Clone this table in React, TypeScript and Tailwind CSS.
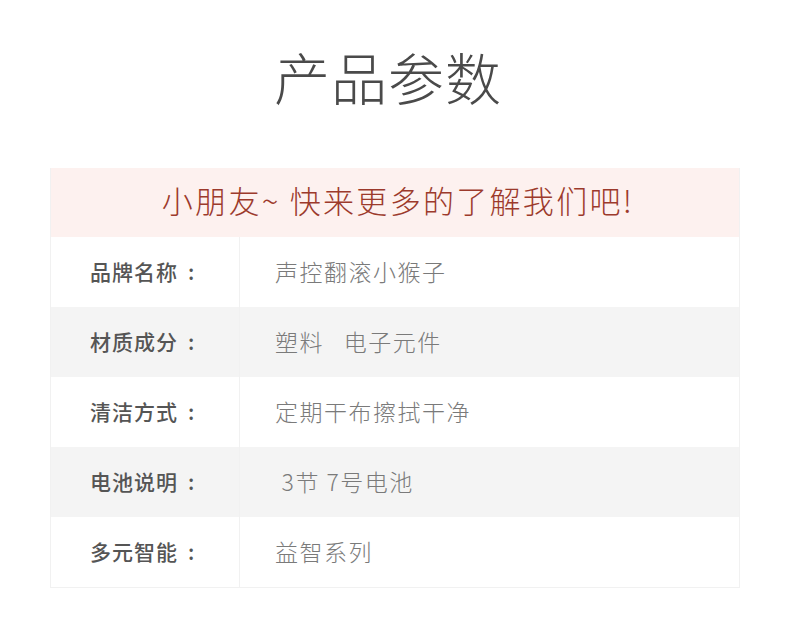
const rows = [
  { label: "品牌名称", value: "声控翻滚小猴子" },
  { label: "材质成分", value: "塑料\u00a0\u00a0 电子元件" },
  { label: "清洁方式", value: "定期干布擦拭干净" },
  { label: "电池说明", value: "\u00a03节 7号电池" },
  { label: "多元智能", value: "益智系列" },
]

export default function App() {
  return (
    <div
      className="w-[790px] h-[632px] bg-white overflow-hidden"
      style={{ fontFamily: '"Noto Sans CJK SC", "Noto Sans", sans-serif' }}
    >
      <h1 className="pt-[36px] pr-[14px] h-[168px] text-center text-[56px] font-extralight leading-[80px] text-[#4a4a4a] tracking-[1px]">
        产品参数
      </h1>

      <div className="mx-[50px] w-[690px] border border-t-0 border-[#f1f1f1]">
        <div className="h-[69px] pl-[6px] pb-[4px] bg-[#fdf1ef] flex items-center justify-center text-[31px] font-extralight text-[#9c3a2c] tracking-[2.3px]">
          小朋友~ 快来更多的了解我们吧!
        </div>
        {rows.map((row, i) => (
          <div
            key={i}
            className={
              "h-[70px] flex items-center " + (i % 2 === 1 ? "bg-[#f4f4f4]" : "bg-white")
            }
          >
            <div className="w-[189px] h-full flex items-center pl-[39px] border-r border-[#f1f1f1] text-[21px] font-medium text-[#555] tracking-[1px]">
              {row.label}
              <span className="ml-[10px]">:</span>
            </div>
            <div className="pl-[35px] pb-[2px] text-[23px] font-light text-[#7a7a7a] tracking-[1.5px]">
              {row.value}
            </div>
          </div>
        ))}
      </div>
    </div>
  )
}
